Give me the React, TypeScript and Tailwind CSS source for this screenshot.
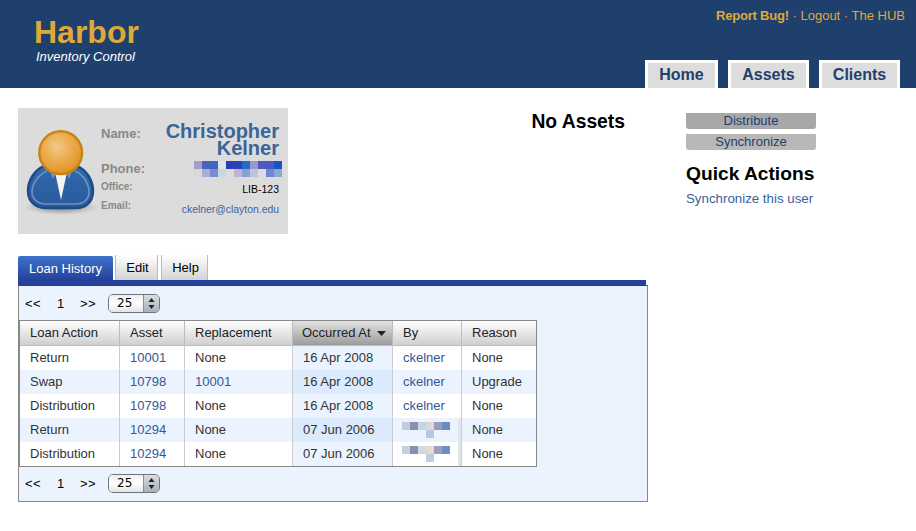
import React from "react";

const phoneTop = ["bg-[#a59cc8]","bg-[#4a63bd]","bg-[#3a66c6]","bg-[#dfe3e6]","bg-[#2a3fb5]","bg-[#2c41b8]","bg-[#236bc6]","bg-[#9c97cb]","bg-[#5358bf]","bg-[#4c59c0]","bg-[#1c53c2]"];
const phoneBottom = ["bg-[#d9d6dc]","bg-[#a9aed4]","bg-[#7a8bcf]","bg-[#c7d9e0]","bg-[#dcdcdc]","bg-[#bdb3d6]","bg-[#8aa0d4]","bg-[#b8c6da]","bg-[#dcdcdc]","bg-[#7286d0]","bg-[#8ea6d6]"];
const blurA = ["bg-[#bfd0da]","bg-[#8c8fb0]","bg-[#c2d6e0]","bg-[#dcd9d4]","bg-[#9c9cba]","bg-[#6a8cc0]"];
const blurB = ["bg-[#c3d2d8]","bg-[#8b8fae]","bg-[#ccdde2]","bg-[#e6d9d0]","bg-[#a09dbe]","bg-[#6b8fc4]"];

function Blocks({ cells }: { cells: string[] }) {
  return (
    <div className="flex">
      {cells.map((c, i) => (
        <div key={i} className={`w-2 h-2 ${c}`} />
      ))}
    </div>
  );
}

function Avatar() {
  return (
    <svg width="77" height="90" viewBox="24 128 77 90" className="mt-5 ml-1.5 shrink-0">
      <defs>
        <radialGradient id="head" cx="0.42" cy="0.36" r="0.7">
          <stop offset="0" stopColor="#f3c88a" />
          <stop offset="0.6" stopColor="#e8a541" />
          <stop offset="1" stopColor="#db8f1e" />
        </radialGradient>
        <linearGradient id="body" x1="0" y1="0" x2="0" y2="1">
          <stop offset="0" stopColor="#2f69ad" />
          <stop offset="1" stopColor="#2a5a9a" />
        </linearGradient>
        <radialGradient id="shadow" cx="0.5" cy="0.5" r="0.5">
          <stop offset="0" stopColor="#555" stopOpacity="0.8" />
          <stop offset="1" stopColor="#777" stopOpacity="0" />
        </radialGradient>
      </defs>
      <ellipse cx="61" cy="207" rx="37" ry="8" fill="url(#shadow)" />
      <path d="M44 166C34 170 28 181 28 191C28 202 36 208 46 208H76C86 208 93 202 93 191C93 181 87 170 77 166Z" fill="url(#body)" stroke="#1d4b8a" strokeWidth="2.4" />
      <path d="M47 171C38 175 32 184 32 192C32 199 38 204 46 204H76C84 204 89 199 89 192C89 184 84 175 75 171" fill="none" stroke="#7f9fc8" strokeWidth="1.6" opacity="0.8" />
      <path d="M55 172L61 200L67 172Z" fill="#f4f4f4" />
      <path d="M49 168L56 172L53 179Z M73 168L66 172L69 179Z" fill="#6f97c6" />
      <circle cx="60.7" cy="152.7" r="21.4" fill="url(#head)" stroke="#c9830f" strokeWidth="2.4" />
    </svg>
  );
}

function Select() {
  return (
    <div className="flex w-[52px] h-[19px] rounded-[5px] border border-[#70757a] overflow-hidden font-['DejaVu_Sans',sans-serif]">
      <div className="w-[34px] bg-linear-to-b from-[#eeeeee] via-white to-[#e4e4e4] text-[12px] leading-[17px] pl-2 text-black">25</div>
      <div className="flex-1 bg-linear-to-b from-[#d8dde2] to-[#a9b0b8] border-l border-[#8a9096] flex items-center justify-center">
        <svg width="7" height="13" viewBox="0 0 7 13">
          <path d="M3.5 1L6.5 5H.5Z M3.5 12L.5 8H6.5Z" fill="#222" />
        </svg>
      </div>
    </div>
  );
}

function Pager() {
  return (
    <div className="flex items-center h-[19px] text-[13px] text-black">
      <span className="w-[30px] pl-[6px] whitespace-nowrap tracking-[0.5px]">&lt;&lt;</span>
      <span className="w-[31px] pl-[8px] pt-px">1</span>
      <span className="w-[30px] whitespace-nowrap tracking-[0.5px]">&gt;&gt;</span>
      <div className="ml-[-2px]"><Select /></div>
    </div>
  );
}

type Row = { action: string; asset: string; rep: string; date: string; by: string | null; reason: string; alt: boolean };
const rows: Row[] = [
  { action: "Return", asset: "10001", rep: "None", date: "16 Apr 2008", by: "ckelner", reason: "None", alt: false },
  { action: "Swap", asset: "10798", rep: "10001", date: "16 Apr 2008", by: "ckelner", reason: "Upgrade", alt: true },
  { action: "Distribution", asset: "10798", rep: "None", date: "16 Apr 2008", by: "ckelner", reason: "None", alt: false },
  { action: "Return", asset: "10294", rep: "None", date: "07 Jun 2006", by: null, reason: "None", alt: true },
  { action: "Distribution", asset: "10294", rep: "None", date: "07 Jun 2006", by: null, reason: "None", alt: false },
];

const th = "h-[25px] p-0 pl-[10px] text-left font-normal text-[13px] text-[#222] border-r border-b border-[#bdbdbd] bg-linear-to-b from-white to-[#cfcfcf]";
const td = "h-6 p-0 pl-[10px] text-[13px] text-[#333] border-r border-[#cccccc]";
const link = "text-[#33598f]";

export default function App() {
  return (
    <div className="w-[916px] h-[531px] bg-white overflow-hidden font-['Liberation_Sans',Arial,sans-serif]">
      <header className="h-[88px] bg-[#1f3f6d] flex justify-between">
        <div className="pl-[34px] pt-[15px]">
          <div className="text-[32px] leading-[34px] font-bold text-[#dfa93a]">Harbor</div>
          <div className="text-[13px] leading-[14px] mt-[1px] ml-[2px] italic text-white">Inventory Control</div>
        </div>
        <div className="flex flex-col items-end justify-between">
          <div className="pt-[7px] pr-[11px] text-[13px] leading-[17px] text-[#dfa93a] whitespace-nowrap">
            <span className="font-bold tracking-[-0.2px]">Report Bug!</span> · Logout · The HUB
          </div>
          <nav className="flex gap-[10px] pr-[16px]">
            {[["Home","w-[73px]"],["Assets","w-[81px]"],["Clients","w-[81px]"]].map(([t,w]) => (
              <div key={t} className={`${w} h-7 border-[3px] border-b-0 border-white bg-[#dddddd] text-center text-[16px] leading-[24px] font-bold text-[#1f3f6d]`}>{t}</div>
            ))}
          </nav>
        </div>
      </header>

      <main className="pl-[18px] pt-5">
        <div className="flex items-start">
          <section className="w-[270px] h-[126px] bg-[#dcdcdc] flex shrink-0">
            <Avatar />
            <div className="w-[178px] pt-[15px]">
              <div className="flex justify-between h-[38px]">
                <span className="text-[13px] leading-[15px] font-bold text-[#888888] mt-[3px]">Name:</span>
                <span className="text-[20px] leading-[17px] font-bold text-[#3a6598] text-right">Christopher<br />Kelner</span>
              </div>
              <div className="flex justify-between h-[20px]">
                <span className="text-[13px] leading-[15px] font-bold text-[#888888]">Phone:</span>
                <div className="flex flex-col mr-[-3px]">
                  <Blocks cells={phoneTop} />
                  <Blocks cells={phoneBottom} />
                </div>
              </div>
              <div className="flex justify-between h-[19px]">
                <span className="text-[10px] leading-[12px] font-bold text-[#888888]">Office:</span>
                <span className="text-[10.5px] leading-[12px] text-black mt-[2px]">LIB-123</span>
              </div>
              <div className="flex justify-between">
                <span className="text-[10px] leading-[12px] font-bold text-[#888888]">Email:</span>
                <span className="text-[10.4px] leading-[13px] text-[#3a6598] mt-[3px]">ckelner@clayton.edu</span>
              </div>
            </div>
          </section>
          <div className="w-[337px] pt-[3px] text-right text-[19.3px] leading-[22px] font-bold text-black shrink-0">No Assets</div>
          <aside className="ml-[61px] w-[130px] shrink-0">
            <div className="mt-[5px] h-4 rounded-b-[3px] bg-[#a8a8a8] text-center text-[13px] leading-[15px] text-[#1f3f6d]">Distribute</div>
            <div className="mt-[5px] h-4 rounded-b-[3px] bg-[#b8b8b8] text-center text-[13px] leading-[15px] text-[#1f3f6d]">Synchronize</div>
            <h2 className="mt-[13px] text-[19.2px] leading-[22px] font-bold text-black whitespace-nowrap">Quick Actions</h2>
            <div className="mt-[6px] text-[13.3px] leading-[16px] text-[#3a5f9a] whitespace-nowrap">Synchronize this user</div>
          </aside>
        </div>

        <section className="w-[630px] mt-[21px]">
          <div className="flex items-end h-[25px] gap-[2px]">
            <div className="w-[95px] h-6 rounded-t-[2px] bg-linear-to-b from-[#3f74cc] to-[#25419c] text-white text-[13px] leading-[25px] text-center">Loan History</div>
            <div className="w-[43px] h-[25px] pl-[2px] border-x border-[#bbbbbb] bg-linear-to-b from-white to-[#d4d4d4] text-[13px] leading-[25px] text-center text-black">Edit</div>
            <div className="w-[47px] h-[25px] pl-[2px] ml-px border-x border-[#bbbbbb] bg-linear-to-b from-white to-[#d4d4d4] text-[13px] leading-[25px] text-center text-black">Help</div>
          </div>
          <div className="h-[5px] w-[628px] bg-[#25419c]" />
          <div className="h-[217px] bg-[#ebf3fe] border border-[#888888] border-t-[#2b3f78]">
            <div className="pt-2"><Pager /></div>
            <table className="mt-[7px] w-[518px] table-fixed border-separate border-spacing-0 border border-[#888888] bg-white">
              <colgroup>
                <col className="w-[100px]" />
                <col className="w-[65px]" />
                <col className="w-[108px]" />
                <col className="w-[100px]" />
                <col className="w-[69px]" />
                <col className="w-[74px]" />
              </colgroup>
              <thead>
                <tr>
                  <th className={th}>Loan Action</th>
                  <th className={th}>Asset</th>
                  <th className={th}>Replacement</th>
                  <th className="h-[25px] p-0 pl-[9px] text-left font-normal text-[13px] text-[#222] border-r border-b border-[#bdbdbd] bg-linear-to-b from-[#e2e2e2] to-[#9c9c9c]">
                    <span className="flex items-center gap-[6px]">Occurred At
                      <svg width="9" height="5" viewBox="0 0 9 5"><path d="M0 0H9L4.5 5Z" fill="#222" /></svg>
                    </span>
                  </th>
                  <th className={th}>By</th>
                  <th className="h-[25px] p-0 pl-[10px] text-left font-normal text-[13px] text-[#222] border-b border-[#bdbdbd] bg-linear-to-b from-white to-[#cfcfcf]">Reason</th>
                </tr>
              </thead>
              <tbody>
                {rows.map((r, i) => (
                  <tr key={i} className={r.alt ? "bg-[#ebf3fe]" : "bg-white"}>
                    <td className={td}>{r.action}</td>
                    <td className={`${td} ${link}`}>{r.asset}</td>
                    <td className={`${td} ${r.rep === "None" ? "" : link}`}>{r.rep}</td>
                    <td className={`${td} ${r.alt ? "bg-[#dceafd]" : "bg-[#ebf3fe]"}`}>{r.date}</td>
                    {r.by ? (
                      <td className={`${td} ${link}`}>{r.by}</td>
                    ) : (
                      <td className="h-6 p-0 pl-[9px] border-r border-[#cccccc] relative">
                        <Blocks cells={r.alt ? blurA : blurB} />
                        <div className={`w-2 h-2 ml-6 ${r.alt ? "bg-[#b9c6de]" : "bg-[#c3cbe0]"}`} />
                        <div className="absolute inset-y-0 right-0 w-[3px] bg-[#e2e6ea]" />
                      </td>
                    )}
                    <td className="h-6 p-0 pl-[10px] text-[13px] text-[#333]">{r.reason}</td>
                  </tr>
                ))}
              </tbody>
            </table>
            <div className="mt-[7px]"><Pager /></div>
          </div>
        </section>
      </main>
    </div>
  );
}
